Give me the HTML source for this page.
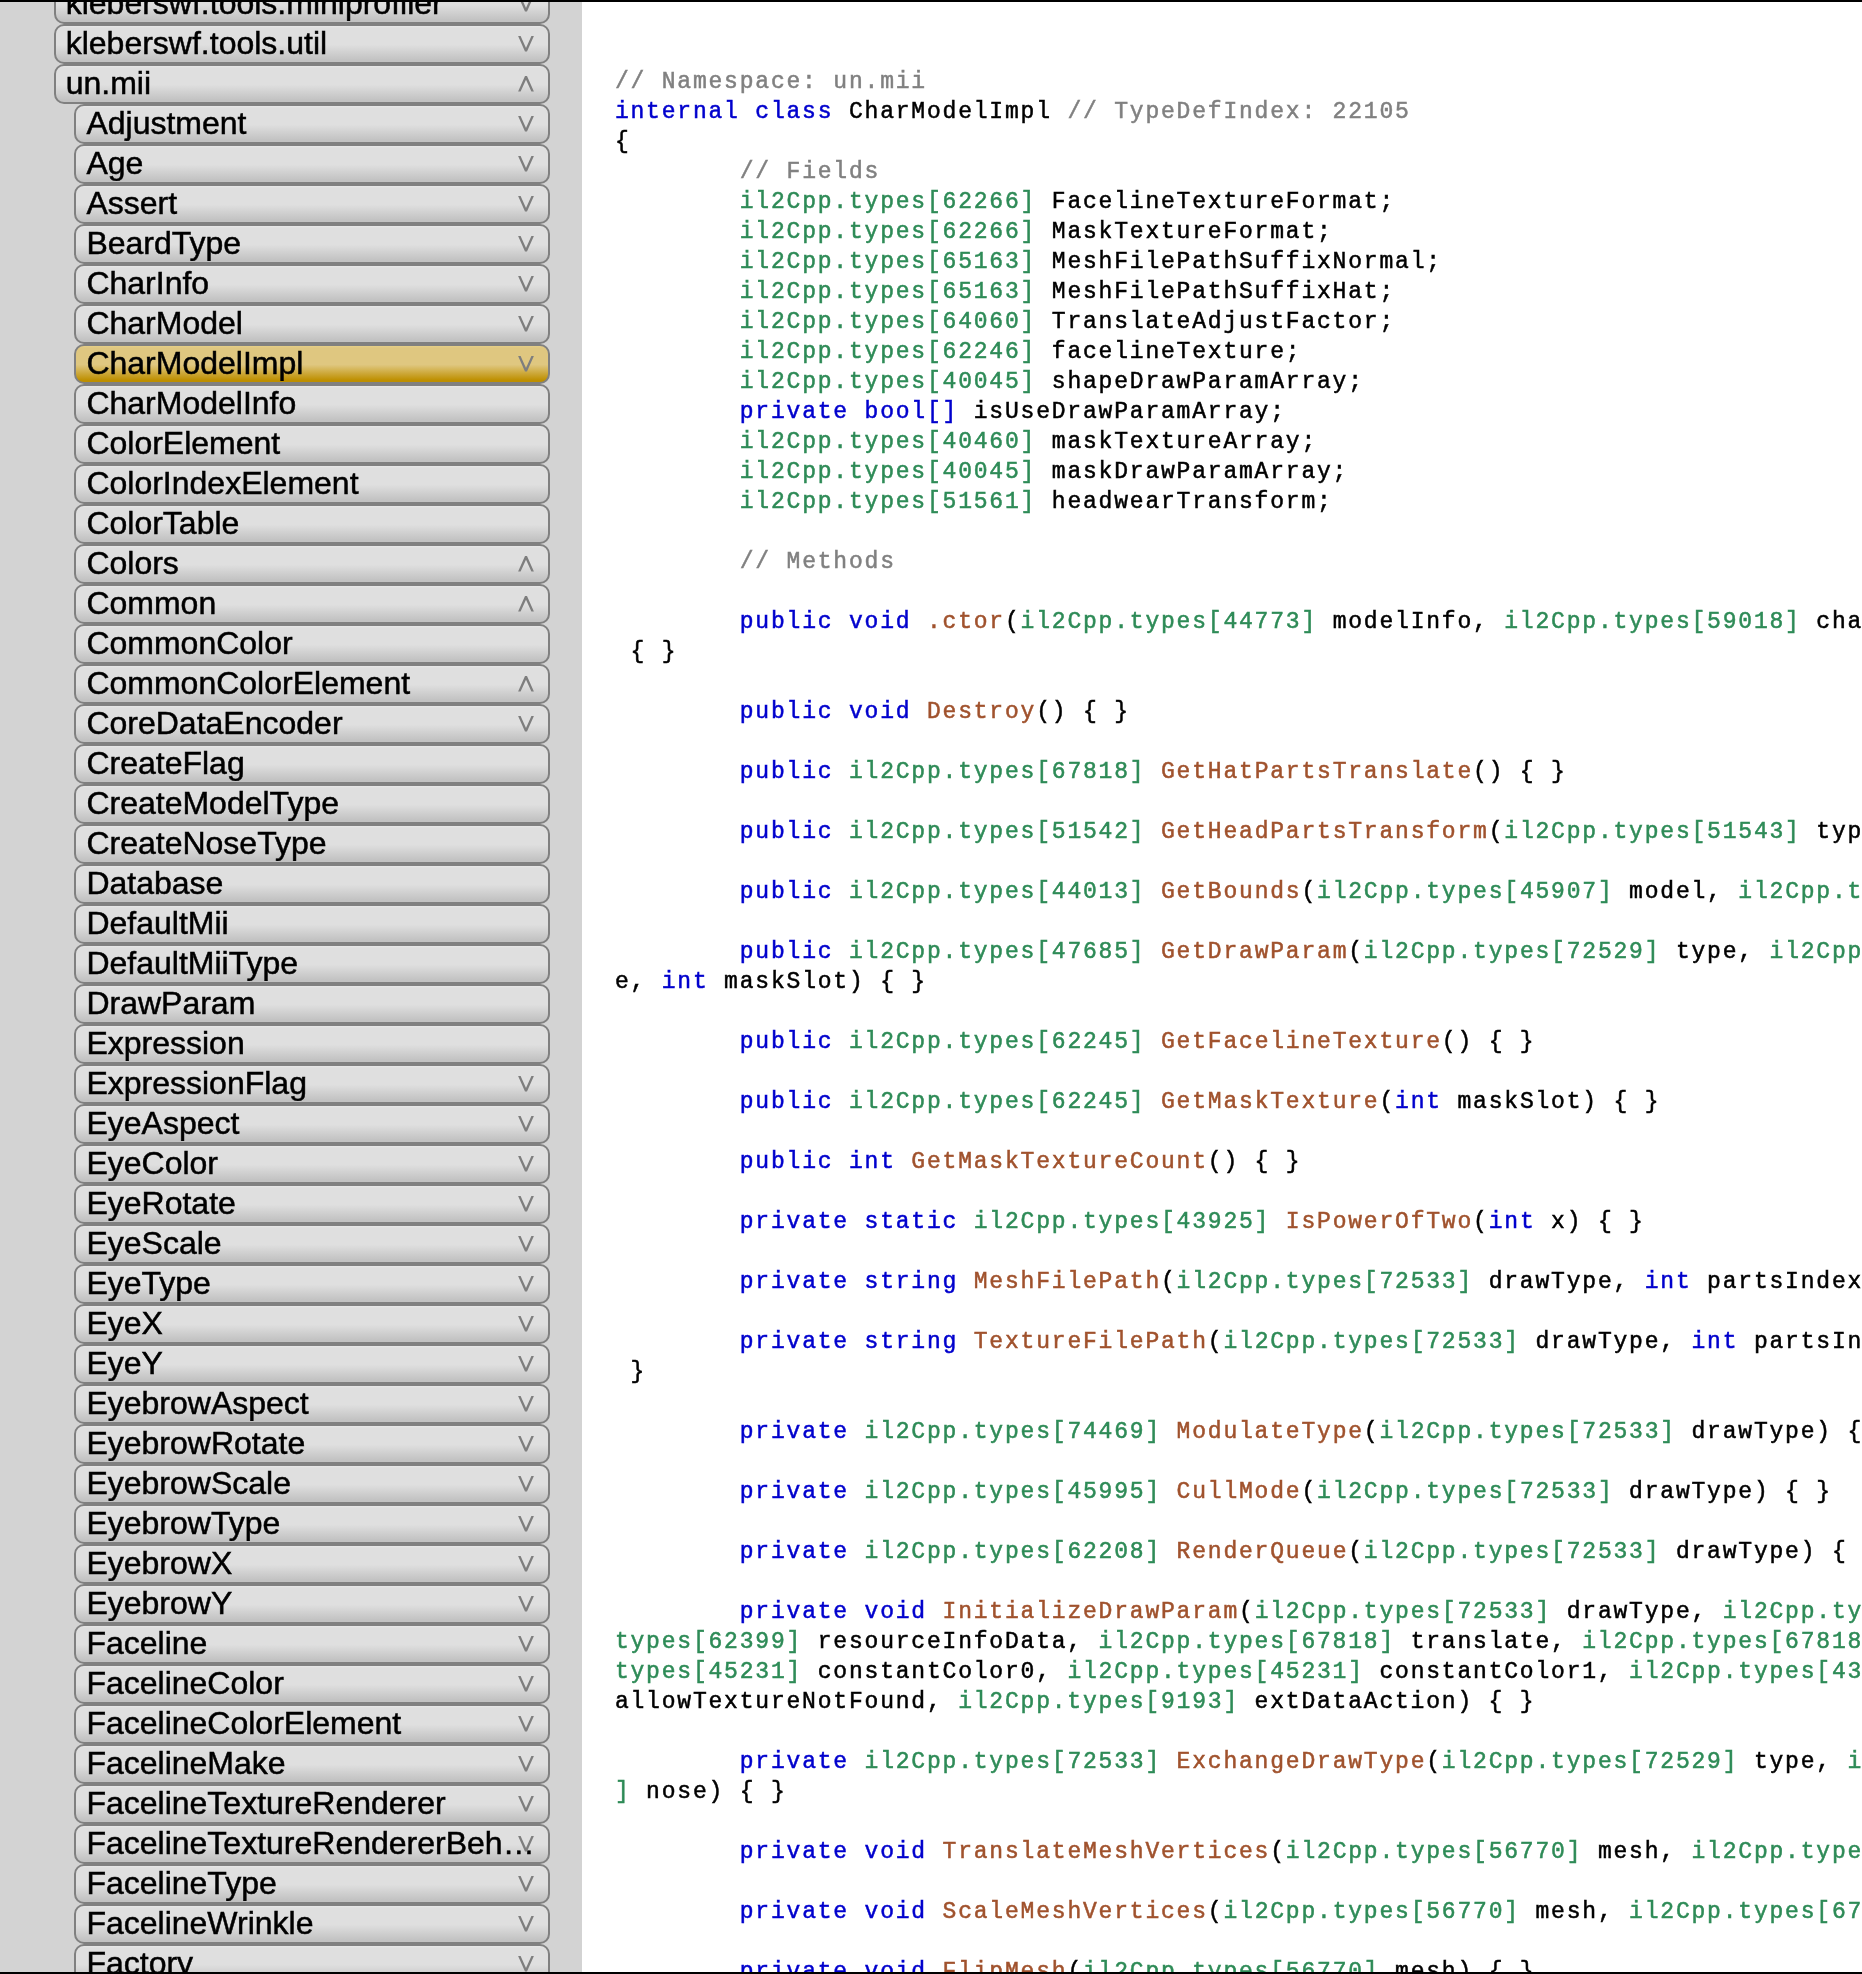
<!DOCTYPE html><html><head><meta charset="utf-8"><style>
html,body{margin:0;padding:0;width:1862px;height:1974px;overflow:hidden;background:#fff;}
#side{will-change:transform;position:absolute;left:0;top:0;width:582px;height:1974px;background:#d3d3d3;overflow:hidden;}
.b{position:absolute;box-sizing:border-box;height:40px;border:2px solid #808080;border-radius:10px;
 background:linear-gradient(to bottom,#e8e8e8 0px,#dfdfdf 2px,#dfdfdf 52%,#c2c2c2 95%,#c2c2c2 100%);
 font-family:"Liberation Sans",sans-serif;font-size:32px;color:#000;white-space:nowrap;overflow:hidden;-webkit-text-stroke:0.5px #000;}
.b.l1{left:54px;width:496px;}
.b.l2{left:74px;width:476px;}
.b.hl{background:linear-gradient(to bottom,#e6d088 0px,#dfc780 2px,#dfc780 52%,#be8f00 95%,#be8f00 100%);}
.tx{position:absolute;left:9.7px;top:-1px;line-height:36px;right:10px;overflow:hidden;text-overflow:ellipsis;}
.l2 .tx{left:10.4px;}
.ar{position:absolute;right:12px;top:8px;}
.ar polygon{fill:#7e7e7e;stroke:none;}
#code{will-change:transform;position:absolute;left:582px;top:0;width:1280px;height:1974px;background:#fff;overflow:hidden;}
pre{position:absolute;left:32.9px;top:67px;margin:0;font-family:"Liberation Mono",monospace;font-size:23px;letter-spacing:1.8px;line-height:30px;color:#000;white-space:pre;-webkit-text-stroke:0.5px currentColor;}
.k{color:#0000cd}.t{color:#2e8b57}.m{color:#a0522d}.c{color:#808080}
#tb{position:absolute;left:0;top:0;width:1862px;height:2px;background:#000;}
#bb{position:absolute;left:0;top:1972px;width:1862px;height:2px;background:#000;}

</style></head><body>
<div id="side">
<div class="b l1" style="top:-16px"><span class="tx">kleberswf.tools.miniprofiler</span><svg class="ar" width="20" height="20" viewBox="0 0 20 20"><polygon points="2.1,2 4.6,2 10,13.9 15.4,2 17.9,2 11,17.6 9,17.6" /></svg></div>
<div class="b l1" style="top:24px"><span class="tx">kleberswf.tools.util</span><svg class="ar" width="20" height="20" viewBox="0 0 20 20"><polygon points="2.1,2 4.6,2 10,13.9 15.4,2 17.9,2 11,17.6 9,17.6" /></svg></div>
<div class="b l1" style="top:64px"><span class="tx">un.mii</span><svg class="ar" width="20" height="20" viewBox="0 0 20 20"><polygon points="2.1,17.6 4.6,17.6 10,5.7 15.4,17.6 17.9,17.6 11,2 9,2" /></svg></div>
<div class="b l2" style="top:104px"><span class="tx">Adjustment</span><svg class="ar" width="20" height="20" viewBox="0 0 20 20"><polygon points="2.1,2 4.6,2 10,13.9 15.4,2 17.9,2 11,17.6 9,17.6" /></svg></div>
<div class="b l2" style="top:144px"><span class="tx">Age</span><svg class="ar" width="20" height="20" viewBox="0 0 20 20"><polygon points="2.1,2 4.6,2 10,13.9 15.4,2 17.9,2 11,17.6 9,17.6" /></svg></div>
<div class="b l2" style="top:184px"><span class="tx">Assert</span><svg class="ar" width="20" height="20" viewBox="0 0 20 20"><polygon points="2.1,2 4.6,2 10,13.9 15.4,2 17.9,2 11,17.6 9,17.6" /></svg></div>
<div class="b l2" style="top:224px"><span class="tx">BeardType</span><svg class="ar" width="20" height="20" viewBox="0 0 20 20"><polygon points="2.1,2 4.6,2 10,13.9 15.4,2 17.9,2 11,17.6 9,17.6" /></svg></div>
<div class="b l2" style="top:264px"><span class="tx">CharInfo</span><svg class="ar" width="20" height="20" viewBox="0 0 20 20"><polygon points="2.1,2 4.6,2 10,13.9 15.4,2 17.9,2 11,17.6 9,17.6" /></svg></div>
<div class="b l2" style="top:304px"><span class="tx">CharModel</span><svg class="ar" width="20" height="20" viewBox="0 0 20 20"><polygon points="2.1,2 4.6,2 10,13.9 15.4,2 17.9,2 11,17.6 9,17.6" /></svg></div>
<div class="b l2 hl" style="top:344px"><span class="tx">CharModelImpl</span><svg class="ar" width="20" height="20" viewBox="0 0 20 20"><polygon points="2.1,2 4.6,2 10,13.9 15.4,2 17.9,2 11,17.6 9,17.6" /></svg></div>
<div class="b l2" style="top:384px"><span class="tx">CharModelInfo</span></div>
<div class="b l2" style="top:424px"><span class="tx">ColorElement</span></div>
<div class="b l2" style="top:464px"><span class="tx">ColorIndexElement</span></div>
<div class="b l2" style="top:504px"><span class="tx">ColorTable</span></div>
<div class="b l2" style="top:544px"><span class="tx">Colors</span><svg class="ar" width="20" height="20" viewBox="0 0 20 20"><polygon points="2.1,17.6 4.6,17.6 10,5.7 15.4,17.6 17.9,17.6 11,2 9,2" /></svg></div>
<div class="b l2" style="top:584px"><span class="tx">Common</span><svg class="ar" width="20" height="20" viewBox="0 0 20 20"><polygon points="2.1,17.6 4.6,17.6 10,5.7 15.4,17.6 17.9,17.6 11,2 9,2" /></svg></div>
<div class="b l2" style="top:624px"><span class="tx">CommonColor</span></div>
<div class="b l2" style="top:664px"><span class="tx">CommonColorElement</span><svg class="ar" width="20" height="20" viewBox="0 0 20 20"><polygon points="2.1,17.6 4.6,17.6 10,5.7 15.4,17.6 17.9,17.6 11,2 9,2" /></svg></div>
<div class="b l2" style="top:704px"><span class="tx">CoreDataEncoder</span><svg class="ar" width="20" height="20" viewBox="0 0 20 20"><polygon points="2.1,2 4.6,2 10,13.9 15.4,2 17.9,2 11,17.6 9,17.6" /></svg></div>
<div class="b l2" style="top:744px"><span class="tx">CreateFlag</span></div>
<div class="b l2" style="top:784px"><span class="tx">CreateModelType</span></div>
<div class="b l2" style="top:824px"><span class="tx">CreateNoseType</span></div>
<div class="b l2" style="top:864px"><span class="tx">Database</span></div>
<div class="b l2" style="top:904px"><span class="tx">DefaultMii</span></div>
<div class="b l2" style="top:944px"><span class="tx">DefaultMiiType</span></div>
<div class="b l2" style="top:984px"><span class="tx">DrawParam</span></div>
<div class="b l2" style="top:1024px"><span class="tx">Expression</span></div>
<div class="b l2" style="top:1064px"><span class="tx">ExpressionFlag</span><svg class="ar" width="20" height="20" viewBox="0 0 20 20"><polygon points="2.1,2 4.6,2 10,13.9 15.4,2 17.9,2 11,17.6 9,17.6" /></svg></div>
<div class="b l2" style="top:1104px"><span class="tx">EyeAspect</span><svg class="ar" width="20" height="20" viewBox="0 0 20 20"><polygon points="2.1,2 4.6,2 10,13.9 15.4,2 17.9,2 11,17.6 9,17.6" /></svg></div>
<div class="b l2" style="top:1144px"><span class="tx">EyeColor</span><svg class="ar" width="20" height="20" viewBox="0 0 20 20"><polygon points="2.1,2 4.6,2 10,13.9 15.4,2 17.9,2 11,17.6 9,17.6" /></svg></div>
<div class="b l2" style="top:1184px"><span class="tx">EyeRotate</span><svg class="ar" width="20" height="20" viewBox="0 0 20 20"><polygon points="2.1,2 4.6,2 10,13.9 15.4,2 17.9,2 11,17.6 9,17.6" /></svg></div>
<div class="b l2" style="top:1224px"><span class="tx">EyeScale</span><svg class="ar" width="20" height="20" viewBox="0 0 20 20"><polygon points="2.1,2 4.6,2 10,13.9 15.4,2 17.9,2 11,17.6 9,17.6" /></svg></div>
<div class="b l2" style="top:1264px"><span class="tx">EyeType</span><svg class="ar" width="20" height="20" viewBox="0 0 20 20"><polygon points="2.1,2 4.6,2 10,13.9 15.4,2 17.9,2 11,17.6 9,17.6" /></svg></div>
<div class="b l2" style="top:1304px"><span class="tx">EyeX</span><svg class="ar" width="20" height="20" viewBox="0 0 20 20"><polygon points="2.1,2 4.6,2 10,13.9 15.4,2 17.9,2 11,17.6 9,17.6" /></svg></div>
<div class="b l2" style="top:1344px"><span class="tx">EyeY</span><svg class="ar" width="20" height="20" viewBox="0 0 20 20"><polygon points="2.1,2 4.6,2 10,13.9 15.4,2 17.9,2 11,17.6 9,17.6" /></svg></div>
<div class="b l2" style="top:1384px"><span class="tx">EyebrowAspect</span><svg class="ar" width="20" height="20" viewBox="0 0 20 20"><polygon points="2.1,2 4.6,2 10,13.9 15.4,2 17.9,2 11,17.6 9,17.6" /></svg></div>
<div class="b l2" style="top:1424px"><span class="tx">EyebrowRotate</span><svg class="ar" width="20" height="20" viewBox="0 0 20 20"><polygon points="2.1,2 4.6,2 10,13.9 15.4,2 17.9,2 11,17.6 9,17.6" /></svg></div>
<div class="b l2" style="top:1464px"><span class="tx">EyebrowScale</span><svg class="ar" width="20" height="20" viewBox="0 0 20 20"><polygon points="2.1,2 4.6,2 10,13.9 15.4,2 17.9,2 11,17.6 9,17.6" /></svg></div>
<div class="b l2" style="top:1504px"><span class="tx">EyebrowType</span><svg class="ar" width="20" height="20" viewBox="0 0 20 20"><polygon points="2.1,2 4.6,2 10,13.9 15.4,2 17.9,2 11,17.6 9,17.6" /></svg></div>
<div class="b l2" style="top:1544px"><span class="tx">EyebrowX</span><svg class="ar" width="20" height="20" viewBox="0 0 20 20"><polygon points="2.1,2 4.6,2 10,13.9 15.4,2 17.9,2 11,17.6 9,17.6" /></svg></div>
<div class="b l2" style="top:1584px"><span class="tx">EyebrowY</span><svg class="ar" width="20" height="20" viewBox="0 0 20 20"><polygon points="2.1,2 4.6,2 10,13.9 15.4,2 17.9,2 11,17.6 9,17.6" /></svg></div>
<div class="b l2" style="top:1624px"><span class="tx">Faceline</span><svg class="ar" width="20" height="20" viewBox="0 0 20 20"><polygon points="2.1,2 4.6,2 10,13.9 15.4,2 17.9,2 11,17.6 9,17.6" /></svg></div>
<div class="b l2" style="top:1664px"><span class="tx">FacelineColor</span><svg class="ar" width="20" height="20" viewBox="0 0 20 20"><polygon points="2.1,2 4.6,2 10,13.9 15.4,2 17.9,2 11,17.6 9,17.6" /></svg></div>
<div class="b l2" style="top:1704px"><span class="tx">FacelineColorElement</span><svg class="ar" width="20" height="20" viewBox="0 0 20 20"><polygon points="2.1,2 4.6,2 10,13.9 15.4,2 17.9,2 11,17.6 9,17.6" /></svg></div>
<div class="b l2" style="top:1744px"><span class="tx">FacelineMake</span><svg class="ar" width="20" height="20" viewBox="0 0 20 20"><polygon points="2.1,2 4.6,2 10,13.9 15.4,2 17.9,2 11,17.6 9,17.6" /></svg></div>
<div class="b l2" style="top:1784px"><span class="tx">FacelineTextureRenderer</span><svg class="ar" width="20" height="20" viewBox="0 0 20 20"><polygon points="2.1,2 4.6,2 10,13.9 15.4,2 17.9,2 11,17.6 9,17.6" /></svg></div>
<div class="b l2" style="top:1824px"><span class="tx">FacelineTextureRendererBehaviour</span><svg class="ar" width="20" height="20" viewBox="0 0 20 20"><polygon points="2.1,2 4.6,2 10,13.9 15.4,2 17.9,2 11,17.6 9,17.6" /></svg></div>
<div class="b l2" style="top:1864px"><span class="tx">FacelineType</span><svg class="ar" width="20" height="20" viewBox="0 0 20 20"><polygon points="2.1,2 4.6,2 10,13.9 15.4,2 17.9,2 11,17.6 9,17.6" /></svg></div>
<div class="b l2" style="top:1904px"><span class="tx">FacelineWrinkle</span><svg class="ar" width="20" height="20" viewBox="0 0 20 20"><polygon points="2.1,2 4.6,2 10,13.9 15.4,2 17.9,2 11,17.6 9,17.6" /></svg></div>
<div class="b l2" style="top:1944px"><span class="tx">Factory</span><svg class="ar" width="20" height="20" viewBox="0 0 20 20"><polygon points="2.1,2 4.6,2 10,13.9 15.4,2 17.9,2 11,17.6 9,17.6" /></svg></div>
</div>
<div id="code">
<pre><span class="c">// Namespace: un.mii</span>
<span class="k">internal class</span> CharModelImpl <span class="c">// TypeDefIndex: 22105</span>
{
        <span class="c">// Fields</span>
        <span class="t">il2Cpp.types[62266]</span> FacelineTextureFormat;
        <span class="t">il2Cpp.types[62266]</span> MaskTextureFormat;
        <span class="t">il2Cpp.types[65163]</span> MeshFilePathSuffixNormal;
        <span class="t">il2Cpp.types[65163]</span> MeshFilePathSuffixHat;
        <span class="t">il2Cpp.types[64060]</span> TranslateAdjustFactor;
        <span class="t">il2Cpp.types[62246]</span> facelineTexture;
        <span class="t">il2Cpp.types[40045]</span> shapeDrawParamArray;
        <span class="k">private bool[]</span> isUseDrawParamArray;
        <span class="t">il2Cpp.types[40460]</span> maskTextureArray;
        <span class="t">il2Cpp.types[40045]</span> maskDrawParamArray;
        <span class="t">il2Cpp.types[51561]</span> headwearTransform;

        <span class="c">// Methods</span>

        <span class="k">public void</span> <span class="m">.ctor</span>(<span class="t">il2Cpp.types[44773]</span> modelInfo, <span class="t">il2Cpp.types[59018]</span> cha
 { }

        <span class="k">public void</span> <span class="m">Destroy</span>() { }

        <span class="k">public</span> <span class="t">il2Cpp.types[67818]</span> <span class="m">GetHatPartsTranslate</span>() { }

        <span class="k">public</span> <span class="t">il2Cpp.types[51542]</span> <span class="m">GetHeadPartsTransform</span>(<span class="t">il2Cpp.types[51543]</span> typ

        <span class="k">public</span> <span class="t">il2Cpp.types[44013]</span> <span class="m">GetBounds</span>(<span class="t">il2Cpp.types[45907]</span> model, <span class="t">il2Cpp.t</span>

        <span class="k">public</span> <span class="t">il2Cpp.types[47685]</span> <span class="m">GetDrawParam</span>(<span class="t">il2Cpp.types[72529]</span> type, <span class="t">il2Cpp</span>
e, <span class="k">int</span> maskSlot) { }

        <span class="k">public</span> <span class="t">il2Cpp.types[62245]</span> <span class="m">GetFacelineTexture</span>() { }

        <span class="k">public</span> <span class="t">il2Cpp.types[62245]</span> <span class="m">GetMaskTexture</span>(<span class="k">int</span> maskSlot) { }

        <span class="k">public int</span> <span class="m">GetMaskTextureCount</span>() { }

        <span class="k">private static</span> <span class="t">il2Cpp.types[43925]</span> <span class="m">IsPowerOfTwo</span>(<span class="k">int</span> x) { }

        <span class="k">private string</span> <span class="m">MeshFilePath</span>(<span class="t">il2Cpp.types[72533]</span> drawType, <span class="k">int</span> partsIndex

        <span class="k">private string</span> <span class="m">TextureFilePath</span>(<span class="t">il2Cpp.types[72533]</span> drawType, <span class="k">int</span> partsIn
 }

        <span class="k">private</span> <span class="t">il2Cpp.types[74469]</span> <span class="m">ModulateType</span>(<span class="t">il2Cpp.types[72533]</span> drawType) {

        <span class="k">private</span> <span class="t">il2Cpp.types[45995]</span> <span class="m">CullMode</span>(<span class="t">il2Cpp.types[72533]</span> drawType) { }

        <span class="k">private</span> <span class="t">il2Cpp.types[62208]</span> <span class="m">RenderQueue</span>(<span class="t">il2Cpp.types[72533]</span> drawType) {

        <span class="k">private void</span> <span class="m">InitializeDrawParam</span>(<span class="t">il2Cpp.types[72533]</span> drawType, <span class="t">il2Cpp.ty</span>
<span class="t">types[62399]</span> resourceInfoData, <span class="t">il2Cpp.types[67818]</span> translate, <span class="t">il2Cpp.types[67818</span>
<span class="t">types[45231]</span> constantColor0, <span class="t">il2Cpp.types[45231]</span> constantColor1, <span class="t">il2Cpp.types[43</span>
allowTextureNotFound, <span class="t">il2Cpp.types[9193]</span> extDataAction) { }

        <span class="k">private</span> <span class="t">il2Cpp.types[72533]</span> <span class="m">ExchangeDrawType</span>(<span class="t">il2Cpp.types[72529]</span> type, <span class="t">i</span>
<span class="t">]</span> nose) { }

        <span class="k">private void</span> <span class="m">TranslateMeshVertices</span>(<span class="t">il2Cpp.types[56770]</span> mesh, <span class="t">il2Cpp.type</span>

        <span class="k">private void</span> <span class="m">ScaleMeshVertices</span>(<span class="t">il2Cpp.types[56770]</span> mesh, <span class="t">il2Cpp.types[67</span>

        <span class="k">private void</span> <span class="m">FlipMesh</span>(<span class="t">il2Cpp.types[56770]</span> mesh) { }</pre>
</div>
<div id="tb"></div><div id="bb"></div>
</body></html>
